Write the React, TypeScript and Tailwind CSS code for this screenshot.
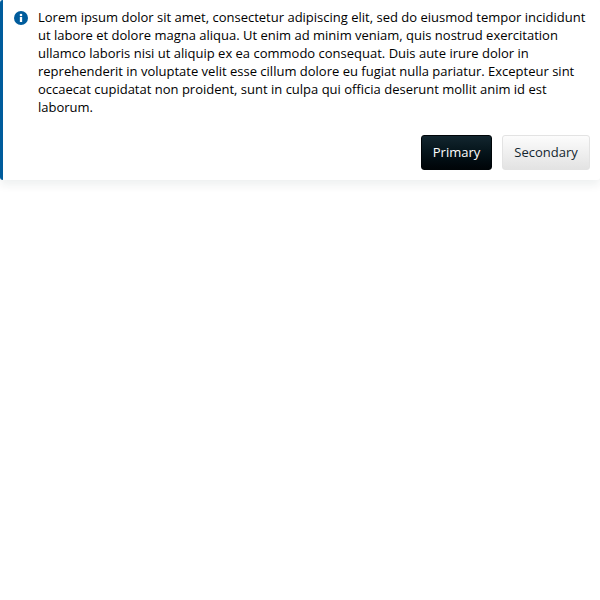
export default function App() {
  return (
    <div className="h-[200px] w-[600px] font-['Open_Sans',sans-serif] text-[13px] leading-[18px] text-black">
      <div className="flex h-[180px] flex-col justify-between rounded-[3px] border-l-[3px] border-[#005c9c] bg-white pt-2 pr-[10px] pb-[10px] pl-[11px] shadow-[0px_5px_10px_0px_#13262f12]">
        <div className="flex gap-[10px]">
          <svg className="mt-[3px] h-[14px] w-[14px] shrink-0" viewBox="0 0 14 14">
            <circle cx="7" cy="7" r="7" fill="#005c9c" />
            <circle cx="7" cy="4" r="1.3" fill="#fff" />
            <path fill="#fff" d="M5.85 6h2.3v5h-2.3z" />
          </svg>
          <p className="w-[552px]">
            Lorem ipsum dolor sit amet, consectetur adipiscing elit, sed do eiusmod tempor incididunt ut labore et dolore magna aliqua. Ut enim ad minim veniam, quis nostrud exercitation ullamco laboris nisi ut aliquip ex ea commodo consequat. Duis aute irure dolor in reprehenderit in voluptate velit esse cillum dolore eu fugiat nulla pariatur. Excepteur sint occaecat cupidatat non proident, sunt in culpa qui officia deserunt mollit anim id est laborum.
          </p>
        </div>
        <div className="flex justify-end gap-[10px]">
          <button className="h-[35px] w-[71px] rounded-[3px] border border-[#000508] bg-linear-to-b from-[#13262f] to-[#000508] pb-px text-white">Primary</button>
          <button className="h-[35px] w-[88px] rounded-[3px] border border-[#e3e3e3] bg-linear-to-b from-[#fcfcfc] to-[#e3e3e3] pb-px text-[#13262f]">Secondary</button>
        </div>
      </div>
    </div>
  );
}
